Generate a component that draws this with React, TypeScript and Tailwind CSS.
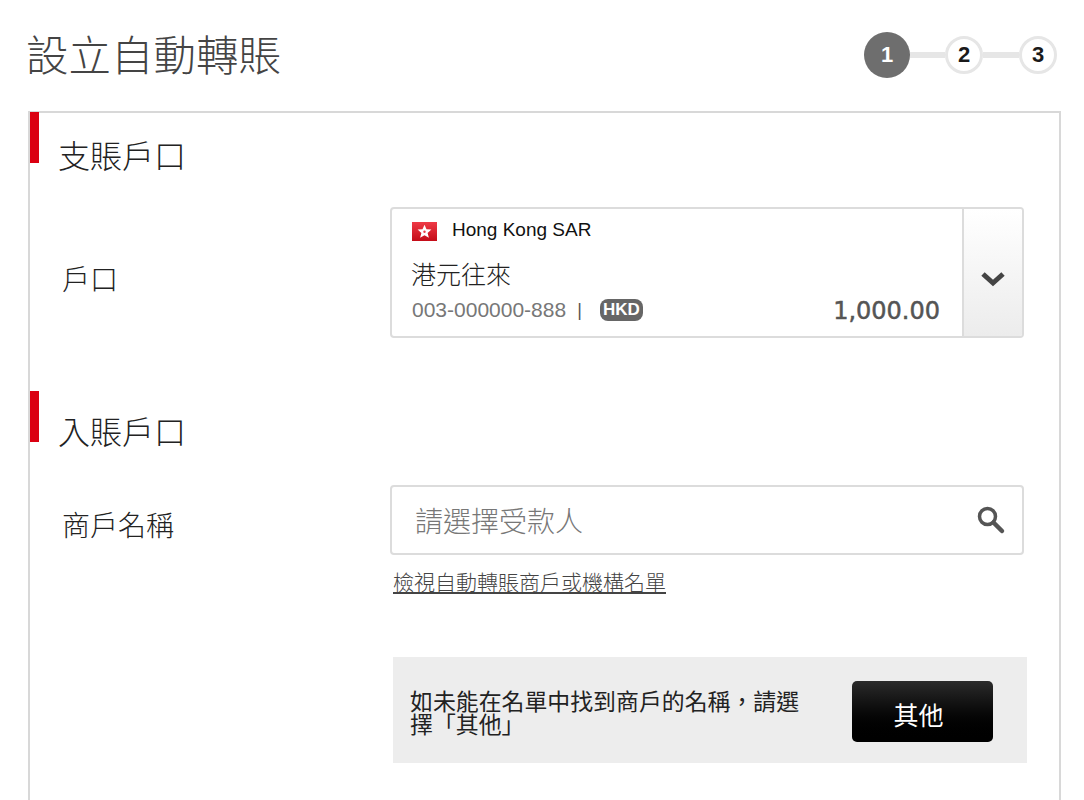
const cjk = "font-['Noto_Sans_CJK_TC','Liberation_Sans',sans-serif]";

function Step({ n, active }: { n: number; active?: boolean }) {
  if (active) {
    return (
      <div className="flex h-[46px] w-[46px] shrink-0 items-center justify-center rounded-full bg-[#6e6e6e] text-[22px] font-bold text-white font-['Liberation_Sans',sans-serif]">
        {n}
      </div>
    );
  }
  return (
    <div className="flex h-[38px] w-[38px] shrink-0 items-center justify-center rounded-full border-[3px] border-[#e6e6e6] bg-white text-[22px] font-bold text-[#1a1a1a] font-['Liberation_Sans',sans-serif]">
      {n}
    </div>
  );
}

function SectionBar() {
  return <div className="absolute left-0 top-0 h-[51px] w-[9px] bg-[#db0011]" />;
}

export default function App() {
  return (
    <div className={`h-[800px] w-[1084px] overflow-hidden bg-white ${cjk}`}>
      {/* Title and steps */}
      <header className="flex h-[111px] items-center justify-between pb-[2px] pl-[26px] pr-[27px]">
        <h1 className="mb-[2px] text-[42.5px] font-light leading-none text-[#444]">設立自動轉賬</h1>
        <div className="flex items-center">
          <Step n={1} active />
          <div className="h-[6px] w-[35px] bg-[#e6e6e6]" />
          <Step n={2} />
          <div className="h-[6px] w-[36px] bg-[#e6e6e6]" />
          <Step n={3} />
        </div>
      </header>

      <main className="ml-[28px] h-[700px] w-[1033px] border-2 border-b-0 border-[#d8d8d8]">
        {/* Debit account */}
        <section className="relative -mt-px pt-[18px]">
          <SectionBar />
          <h2 className="ml-[28px] text-[32px] font-light leading-[48px] text-[#222]">支賬戶口</h2>
          <div className="mt-[29px] flex">
            <div className="flex w-[360px] items-center pl-[32px] pt-[10px] text-[28px] font-light text-[#222]">戶口</div>
            <div className="flex h-[131px] w-[634px] overflow-hidden rounded-[4px] border-2 border-[#dcdcdc]">
              <div className="flex min-w-0 flex-1 flex-col pl-[20px] pr-[22px] pt-[10px]">
                <div className="flex h-[24px] items-center gap-[15px] font-['Liberation_Sans',sans-serif] text-[19px] text-[#111]">
                  <svg width="25" height="19" viewBox="0 0 25 19" className="shrink-0">
                    <defs>
                      <linearGradient id="flag" x1="0" y1="0" x2="0" y2="1">
                        <stop offset="0" stopColor="#ee3a46" />
                        <stop offset="1" stopColor="#c40c18" />
                      </linearGradient>
                    </defs>
                    <rect width="25" height="19" fill="url(#flag)" />
                    <polygon
                      fill="#fff"
                      points="12.5,2.8 14.5,7.2 19.4,7.6 15.6,10.9 16.9,15.8 12.5,13.2 8.1,15.8 9.4,10.9 5.6,7.6 10.5,7.2"
                    />
                    <circle cx="12.5" cy="9.8" r="1.2" fill="#e8404a" />
                  </svg>
                  <span className="mb-[2px]">Hong Kong SAR</span>
                </div>
                <div className="-ml-px mt-[14px] text-[25px] font-light leading-[32px] text-[#222]">港元往來</div>
                <div className="mt-[3px] flex h-[36px] items-center justify-between">
                  <div className="flex items-center font-['Liberation_Sans',sans-serif] text-[21px] text-[#777]">
                    <span>003-000000-888</span>
                    <span className="ml-[11px] text-[18px] text-[#555]">|</span>
                    <span className="ml-[18px] flex h-[22px] w-[43px] items-center justify-center rounded-[8px] bg-[#666] text-[17px] font-bold text-white">HKD</span>
                  </div>
                  <span className="font-['DejaVu_Sans',sans-serif] pt-[2px] text-[24px] text-[#555] [-webkit-text-stroke:0.5px_#555]">1,000.00</span>
                </div>
              </div>
              <div className="flex w-[60px] shrink-0 items-center justify-center border-l-2 border-[#dcdcdc] bg-gradient-to-b from-white to-[#ececec]">
                <svg width="26" height="18" viewBox="0 0 26 18" className="mt-[12px]">
                  <path d="M3 4l10 9 10-9" fill="none" stroke="#444" strokeWidth="5" />
                </svg>
              </div>
            </div>
          </div>
        </section>

        {/* Credit account */}
        <section className="relative mt-[53px] pt-[15px]">
          <SectionBar />
          <h2 className="ml-[28px] text-[32px] font-light leading-[48px] text-[#222]">入賬戶口</h2>
          <div className="mt-[31px] flex">
            <div className="flex h-[78px] w-[360px] items-center pl-[32px] text-[28px] font-light text-[#222]">商戶名稱</div>
            <div>
              <div className="flex h-[70px] w-[634px] items-center justify-between rounded-[4px] border-2 border-[#dcdcdc] pl-[23px] pr-[16px]">
                <span className="text-[28px] font-light text-[#777]">請選擇受款人</span>
                <svg width="30" height="30" viewBox="0 0 30 30">
                  <circle cx="11.5" cy="11.5" r="8" fill="none" stroke="#555" strokeWidth="3.5" />
                  <path d="M17.5 17.5l8.5 8.5" stroke="#555" strokeWidth="4.5" strokeLinecap="round" />
                </svg>
              </div>
              <a className="ml-[3px] mt-[12px] block text-[21px] font-light leading-[28px] text-[#444] underline">檢視自動轉賬商戶或機構名單</a>
              <div className="ml-[3px] mt-[62px] flex h-[106px] w-[634px] items-center justify-between bg-[#ededed] pl-[17px] pr-[34px]">
                <p className="mt-[4px] w-[395px] text-[22.9px] font-normal leading-[23px] text-[#222]">如未能在名單中找到商戶的名稱，請選擇「其他」</p>
                <button className="mt-[2px] h-[61px] w-[141px] rounded-[5px] bg-gradient-to-b from-[#2b2b2b] to-black pr-[8px] pt-[8px] text-[25px] font-normal text-white">其他</button>
              </div>
            </div>
          </div>
        </section>
      </main>
    </div>
  );
}
